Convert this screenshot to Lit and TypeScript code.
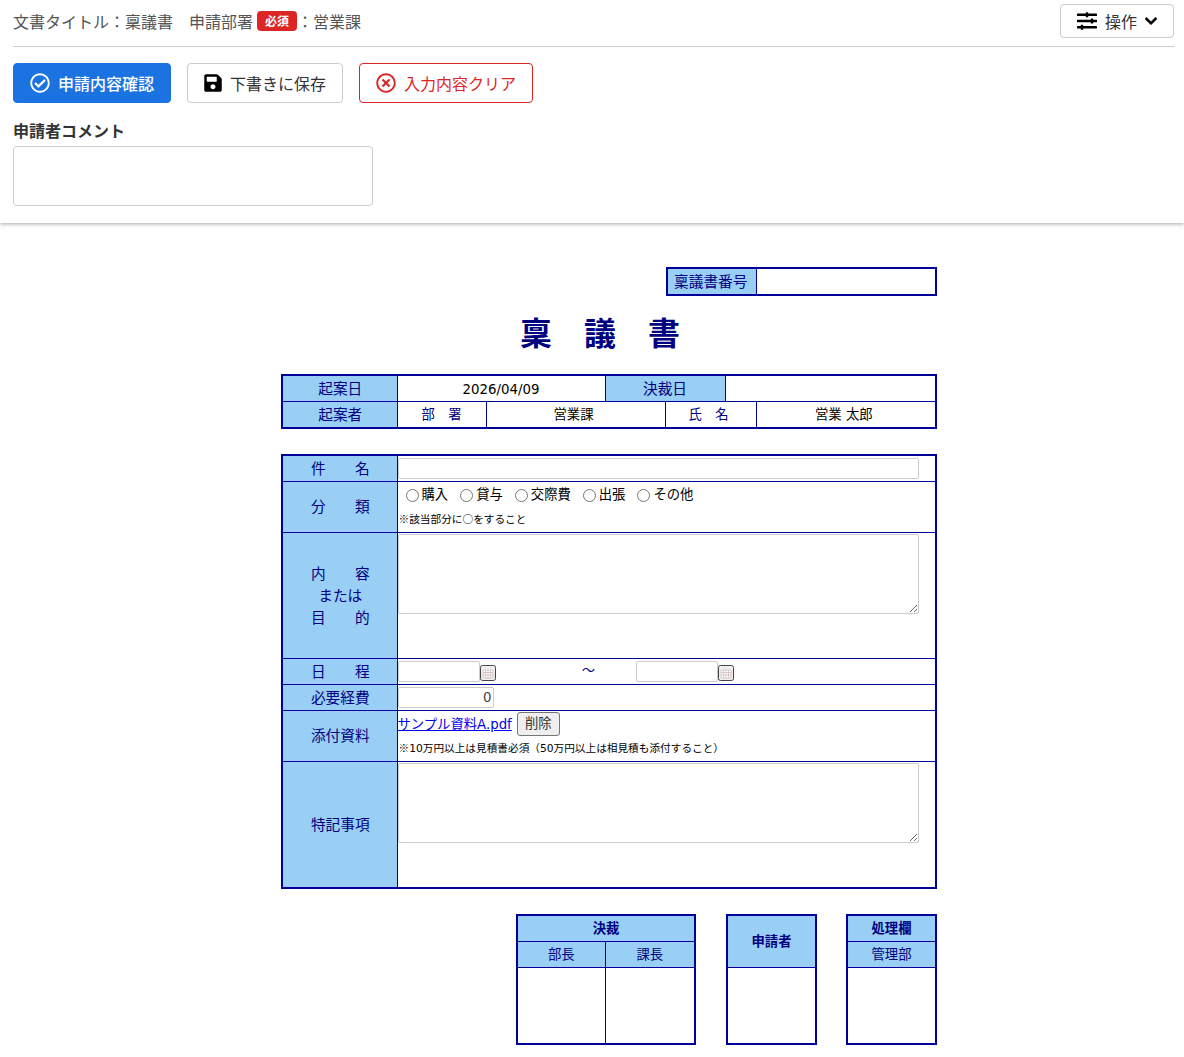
import { LitElement, html, css, svg } from 'lit';
import { customElement } from 'lit/decorators.js';

const checkIcon = svg`<path d="M256 8C119.033 8 8 119.033 8 256s111.033 248 248 248 248-111.033 248-248S392.967 8 256 8zm0 48c110.532 0 200 89.451 200 200 0 110.532-89.451 200-200 200-110.532 0-200-89.451-200-200 0-110.532 89.451-200 200-200m140.204 130.267l-22.536-22.718c-4.667-4.705-12.265-4.736-16.970-.068L215.346 303.697l-59.792-60.277c-4.667-4.705-12.265-4.736-16.970-.069l-22.719 22.536c-4.705 4.667-4.736 12.265-.068 16.971l90.781 91.516c4.667 4.705 12.265 4.736 16.970.068l172.589-171.204c4.704-4.668 4.734-12.266.067-16.971z"/>`;
const timesIcon = svg`<path d="M256 8C119 8 8 119 8 256s111 248 248 248 248-111 248-248S393 8 256 8zm0 448c-110.500 0-200-89.500-200-200S145.500 56 256 56s200 89.500 200 200-89.500 200-200 200zm101.800-262.200L295.600 256l62.200 62.200c4.700 4.700 4.700 12.300 0 17l-22.600 22.600c-4.700 4.700-12.300 4.700-17 0L256 295.600l-62.200 62.200c-4.700 4.700-12.300 4.700-17 0l-22.600-22.600c-4.700-4.700-4.700-12.300 0-17l62.200-62.200-62.200-62.200c-4.700-4.700-4.700-12.300 0-17l22.600-22.600c4.700-4.700 12.300-4.700 17 0l62.200 62.200 62.200-62.200c4.700-4.700 12.300-4.700 17 0l22.600 22.600c4.700 4.700 4.700 12.300 0 17z"/>`;
const saveIcon = svg`<path d="M433.941 129.941l-83.882-83.882A48 48 0 0 0 316.118 32H48C21.490 32 0 53.490 0 80v352c0 26.510 21.490 48 48 48h352c26.510 0 48-21.490 48-48V163.882a48 48 0 0 0-14.059-33.941zM224 416c-35.346 0-64-28.654-64-64 0-35.346 28.654-64 64-64s64 28.654 64 64c0 35.346-28.654 64-64 64zm96-304.520V212c0 6.627-5.373 12-12 12H76c-6.627 0-12-5.373-12-12V108c0-6.627 5.373-12 12-12h228.520c3.183 0 6.235 1.264 8.485 3.515l3.480 3.480A11.996 11.996 0 0 1 320 111.480z"/>`;
const slidersIcon = svg`<path d="M496 384H160v-16c0-8.800-7.200-16-16-16h-32c-8.800 0-16 7.200-16 16v16H16c-8.800 0-16 7.200-16 16v32c0 8.800 7.200 16 16 16h80v16c0 8.800 7.200 16 16 16h32c8.800 0 16-7.200 16-16v-16h336c8.800 0 16-7.200 16-16v-32c0-8.800-7.200-16-16-16zm0-160h-80v-16c0-8.800-7.200-16-16-16h-32c-8.800 0-16 7.200-16 16v16H16c-8.800 0-16 7.200-16 16v32c0 8.800 7.200 16 16 16h336v16c0 8.800 7.200 16 16 16h32c8.800 0 16-7.200 16-16v-16h80c8.800 0 16-7.200 16-16v-32c0-8.800-7.200-16-16-16zm0-160H288V48c0-8.800-7.200-16-16-16h-32c-8.800 0-16 7.200-16 16v16H16C7.200 64 0 71.200 0 80v32c0 8.800 7.200 16 16 16h208v16c0 8.800 7.200 16 16 16h32c8.800 0 16-7.200 16-16v-16h208c8.800 0 16-7.200 16-16V80c0-8.800-7.200-16-16-16z"/>`;
const chevronIcon = svg`<path d="M207.029 381.476L12.686 187.132c-9.373-9.373-9.373-24.569 0-33.941l22.667-22.667c9.357-9.357 24.522-9.375 33.901-.04L224 284.505l154.745-154.021c9.379-9.335 24.544-9.317 33.901.04l22.667 22.667c9.373 9.373 9.373 24.569 0 33.941L240.971 381.476c-9.373 9.372-24.569 9.372-33.942 0z"/>`;

const categories = ['購入', '貸与', '交際費', '出張', 'その他'];

@customElement('app-root')
export class AppRoot extends LitElement {
  static styles = css`
    :host {
      display: block;
      font-family: 'Noto Sans CJK JP', 'Noto Sans', sans-serif;
      color: #000080;
      background: #fff;
    }
    * {
      box-sizing: border-box;
    }

    .header {
      padding: 0 10px 17px 13px;
      box-shadow: 0 1px 4px rgba(0, 0, 0, 0.35);
      color: #212529;
    }
    .top-row {
      height: 47px;
      display: flex;
      align-items: flex-start;
      justify-content: space-between;
      border-bottom: 1px solid #ccc;
    }
    .doc-info {
      display: flex;
      align-items: center;
      height: 42px;
      font-size: 16px;
      color: #555;
      white-space: pre;
    }
    .badge {
      background: #dc2626;
      color: #fff;
      font-size: 12px;
      font-weight: 700;
      border-radius: 4px;
      height: 20px;
      width: 40px;
      line-height: 20px;
      text-align: center;
      margin-left: 4px;
    }
    .ops {
      margin-top: 4px;
      width: 114px;
      height: 34px;
      background: #fff;
      border: 1px solid #ccc;
      border-radius: 4px;
      display: flex;
      align-items: center;
      justify-content: center;
      gap: 8px;
      font: inherit;
      font-size: 16px;
      color: #333;
      padding: 0;
    }
    .ops .icon {
      color: #000;
    }
    .ops .chevron {
      width: 12px;
      stroke: currentColor;
      stroke-width: 24;
    }
    .actions {
      display: flex;
      gap: 16px;
      margin-top: 16px;
    }
    .btn {
      height: 40px;
      border-radius: 4px;
      border: 1px solid #ccc;
      background: #fff;
      color: #333;
      font: inherit;
      font-size: 16px;
      display: flex;
      align-items: center;
      justify-content: center;
      gap: 8px;
      padding: 0;
    }
    .btn.primary {
      width: 158px;
      background: #1a73e0;
      border-color: #1a73e0;
      color: #fff;
      font-weight: 500;
    }
    .btn.save {
      width: 156px;
    }
    .btn.save .icon {
      width: 18px;
      color: #000;
    }
    .btn.clear {
      width: 174px;
      border-color: #dc2626;
      color: #dc2626;
    }
    .icon {
      width: 20px;
      height: 20px;
      fill: currentColor;
      flex: none;
    }
    .comment-label {
      margin-top: 16px;
      font-size: 16px;
      font-weight: 700;
      line-height: 22px;
      color: #333;
    }
    .comment {
      display: block;
      margin-top: 5px;
      width: 360px;
      height: 60px;
      border: 1px solid #ccc;
      border-radius: 4px;
      resize: none;
    }

    .form {
      width: 656px;
      margin-left: 281px;
      padding-top: 44px;
      font-family: 'DejaVu Sans', 'Noto Sans CJK JP', sans-serif;
    }
    table {
      border-collapse: collapse;
      table-layout: fixed;
      border: 2px solid #000099;
      background: #fff;
    }
    th,
    td {
      border: 1px solid #000099;
      padding: 0;
      font-weight: 400;
      text-align: center;
      font-size: 13.33px;
    }
    th {
      background: #99cff5;
      font-size: 14.67px;
      line-height: 22px;
      color: #000080;
    }
    td {
      color: #000;
    }
    td.navy {
      color: #000080;
    }
    .number {
      width: 271px;
      margin-left: auto;
    }
    .number tr {
      height: 27px;
    }
    .number th {
      padding-right: 2px;
    }
    .title {
      margin: 17px 18px 19px 0;
      text-align: center;
      font-size: 32px;
      font-weight: 700;
      line-height: 42px;
      color: #000080;
    }
    .meta {
      width: 656px;
    }
    .meta tr {
      height: 26px;
    }
    .meta tr + tr {
      height: 27px;
    }
    .meta th {
      padding-top: 2px;
    }
    .meta th:first-child,
    .main th {
      padding-left: 1px;
    }
    .meta tr:first-child td {
      padding-top: 2px;
    }
    .meta tr + tr td {
      padding-bottom: 2px;
    }
    .meta td.off {
      padding-right: 4px;
    }
    .main {
      width: 656px;
      margin-top: 25px;
    }
    .main th {
      padding-top: 2px;
    }
    .main th.tall {
      padding-top: 0;
    }
    .main td {
      text-align: left;
      vertical-align: top;
      line-height: 18px;
    }
    .row-input {
      display: block;
      width: 521px;
      height: 21px;
      margin: 2px 0 0;
      border: 1px solid #ccc;
      border-radius: 2px;
      padding: 0 2px;
    }
    .row-area {
      display: block;
      width: 521px;
      height: 80px;
      margin: 1px 0 0;
      border: 1px solid #ccc;
      border-radius: 2px;
    }
    .radios {
      display: flex;
      gap: 12px;
      padding: 1px 0 0 8px;
      height: 26px;
      align-items: center;
    }
    .radios label {
      display: flex;
      align-items: center;
      gap: 3px;
    }
    .radios input {
      width: 13px;
      height: 13px;
      margin: 0;
    }
    .note {
      font-size: 10.67px;
      line-height: 16px;
      padding: 3px 0 0 1px;
    }
    .cjk {
      font-family: 'Noto Sans CJK JP', sans-serif;
    }
    .dates {
      display: flex;
      align-items: center;
      height: 25px;
    }
    .date-input {
      width: 82px;
      height: 21px;
      border: 1px solid #ccc;
      border-radius: 2px;
    }
    .cal {
      width: 16px;
      height: 16px;
      flex: none;
      margin-top: 4px;
    }
    .tilde {
      width: 140px;
      padding-left: 46px;
      text-align: center;
      color: #000080;
    }
    .amount {
      display: block;
      width: 96px;
      height: 21px;
      margin-top: 2px;
      border: 1px solid #ccc;
      border-radius: 2px;
      text-align: right;
      font: inherit;
      color: #444;
      padding: 0 1px;
    }
    .file-row {
      display: flex;
      align-items: center;
      gap: 5px;
      height: 26px;
    }
    .file-row a {
      color: #0000ee;
      margin-top: 2px;
    }
    .file-row button {
      width: 43px;
      height: 24px;
      padding: 0;
      font: inherit;
      color: #333;
      background: #efefef;
      border: 1px solid #767676;
      border-radius: 3px;
    }
    .stamps {
      display: flex;
      justify-content: flex-end;
      gap: 30px;
      margin-top: 25px;
    }
    .stamps tr {
      height: 26px;
    }
    .stamps tr.seal {
      height: 77px;
    }
    .stamps th {
      font-size: 13.33px;
      line-height: 18px;
      padding-top: 2px;
    }
    .stamps th.strong {
      font-weight: 700;
    }
    .stamps .last {
      margin-left: -1px;
    }
  `;

  render() {
    return html`
      <div class="header">
        <div class="top-row">
          <div class="doc-info">文書タイトル：稟議書　申請部署<span class="badge">必須</span>：営業課</div>
          <button class="ops">
            <svg class="icon" viewBox="0 0 512 512">${slidersIcon}</svg>
            操作
            <svg class="icon chevron" viewBox="0 0 448 512">${chevronIcon}</svg>
          </button>
        </div>
        <div class="actions">
          <button class="btn primary">
            <svg class="icon" viewBox="0 0 512 512">${checkIcon}</svg>申請内容確認
          </button>
          <button class="btn save">
            <svg class="icon" viewBox="0 0 448 512">${saveIcon}</svg>下書きに保存
          </button>
          <button class="btn clear">
            <svg class="icon" viewBox="0 0 512 512">${timesIcon}</svg>入力内容クリア
          </button>
        </div>
        <div class="comment-label">申請者コメント</div>
        <textarea class="comment"></textarea>
      </div>

      <div class="form">
        <table class="number">
          <colgroup><col style="width:89px" /><col /></colgroup>
          <tr><th>稟議書番号</th><td></td></tr>
        </table>
        <div class="title">稟　議　書</div>

        <table class="meta">
          <colgroup>
            <col style="width:115px" /><col style="width:89px" /><col style="width:119px" />
            <col style="width:60px" /><col style="width:60px" /><col style="width:31px" /><col />
          </colgroup>
          <tr>
            <th>起案日</th>
            <td colspan="2">2026/04/09</td>
            <th colspan="2">決裁日</th>
            <td colspan="2"></td>
          </tr>
          <tr>
            <th>起案者</th>
            <td class="navy">部　署</td>
            <td class="off" colspan="2">営業課</td>
            <td class="navy off" colspan="2">氏　名</td>
            <td class="off">営業 太郎</td>
          </tr>
        </table>

        <table class="main">
          <colgroup><col style="width:115px" /><col /></colgroup>
          <tr style="height:26px">
            <th>件　　名</th>
            <td><input class="row-input" /></td>
          </tr>
          <tr style="height:51px">
            <th class="tall">分　　類</th>
            <td>
              <div class="radios">
                ${categories.map(
                  (c) => html`<label><input type="radio" name="cat" />${c}</label>`
                )}
              </div>
              <div class="note"><span class="cjk">※</span>該当部分に<span class="cjk">○</span>をすること</div>
            </td>
          </tr>
          <tr style="height:126px">
            <th>内　　容<br />または<br />目　　的</th>
            <td><textarea class="row-area"></textarea></td>
          </tr>
          <tr style="height:26px">
            <th>日　　程</th>
            <td>
              <div class="dates">
                <input class="date-input" />
                ${this.renderCalendar()}
                <span class="tilde">～</span>
                <input class="date-input" />
                ${this.renderCalendar()}
              </div>
            </td>
          </tr>
          <tr style="height:26px">
            <th>必要経費</th>
            <td><input class="amount" value="0" /></td>
          </tr>
          <tr style="height:51px">
            <th class="tall">添付資料</th>
            <td>
              <div class="file-row"><a href="#">サンプル資料A.pdf</a><button>削除</button></div>
              <div class="note"><span class="cjk">※</span>10万円以上は見積書必須（50万円以上は相見積も添付すること）</div>
            </td>
          </tr>
          <tr style="height:127px">
            <th>特記事項</th>
            <td><textarea class="row-area"></textarea></td>
          </tr>
        </table>

        <div class="stamps">
          <table style="width:180px">
            <colgroup><col style="width:88px" /><col /></colgroup>
            <tr><th class="strong" colspan="2">決裁</th></tr>
            <tr><th>部長</th><th>課長</th></tr>
            <tr class="seal"><td></td><td></td></tr>
          </table>
          <table style="width:91px">
            <tr><th class="strong" rowspan="2">申請者</th></tr>
            <tr></tr>
            <tr class="seal"><td></td></tr>
          </table>
          <table class="last" style="width:91px">
            <tr><th class="strong">処理欄</th></tr>
            <tr><th>管理部</th></tr>
            <tr class="seal"><td></td></tr>
          </table>
        </div>
      </div>
    `;
  }

  private renderCalendar() {
    return html`<svg class="cal" viewBox="0 0 16 16">
      <rect x="0.5" y="0.5" width="15" height="15" rx="2" fill="#efefef" stroke="#444" />
      <path d="M3 5h10v8H3zM3 7.500h10M3 10h10M5.500 5v8M8 5v8M10.500 5v8" fill="#fff" stroke="#c8b8b8" stroke-width="0.7" />
    </svg>`;
  }
}
